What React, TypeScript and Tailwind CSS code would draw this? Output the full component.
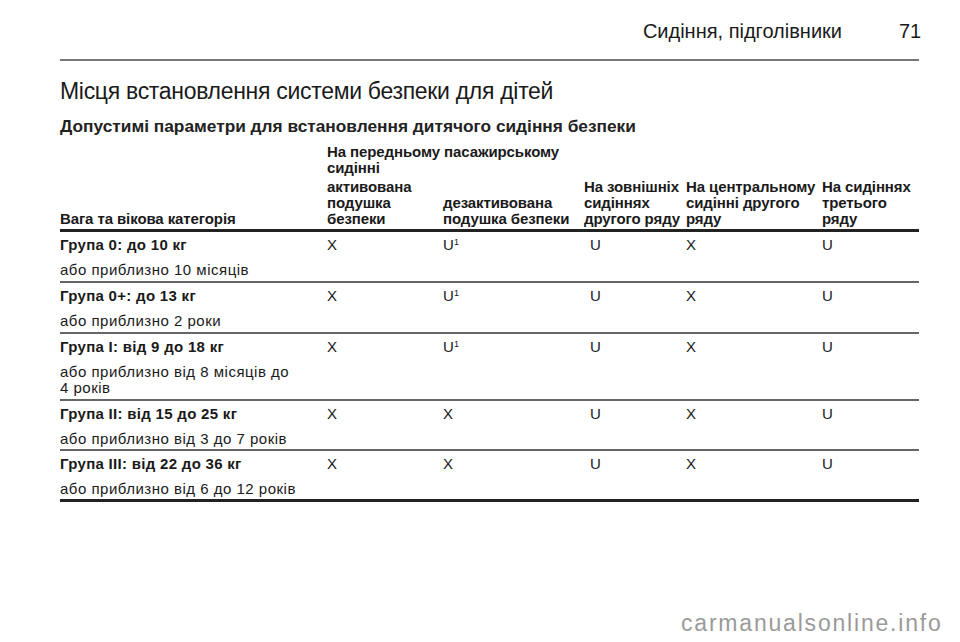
import React from "react";

const rows = [
  { t: "Група 0: до 10 кг", s: ["або приблизно 10 місяців"], v: ["X", "U1", "U", "X", "U"] },
  { t: "Група 0+: до 13 кг", s: ["або приблизно 2 роки"], v: ["X", "U1", "U", "X", "U"] },
  { t: "Група I: від 9 до 18 кг", s: ["або приблизно від 8 місяців до", "4 років"], v: ["X", "U1", "U", "X", "U"] },
  { t: "Група II: від 15 до 25 кг", s: ["або приблизно від 3 до 7 років"], v: ["X", "X", "U", "X", "U"] },
  { t: "Група III: від 22 до 36 кг", s: ["або приблизно від 6 до 12 років"], v: ["X", "X", "U", "X", "U"] },
];

const cols = "grid grid-cols-[267px_116px_141px_102px_136px_97px]";

export default function App() {
  return (
    <div
      className="relative w-[960px] h-[642px] bg-white text-[#1a1a1a] overflow-hidden"
      style={{ fontFamily: '"Liberation Sans", Arial, sans-serif' }}
    >
      <div className="pl-[60px] w-[919px]">
        <div className="flex justify-end items-end h-[43px] text-[20px] leading-[24px]">
          <span>Сидіння, підголівники</span>
          <span className="ml-[57px] w-[20px] text-right">71</span>
        </div>
        <div className="mt-[16px] h-[2px] bg-[#777]" />
        <div className="mt-[16px] text-[23px] leading-[28px] tracking-[-0.3px]">
          Місця встановлення системи безпеки для дітей
        </div>
        <div className="mt-[11px] text-[17.3px] leading-[20px] font-bold text-[#222]">
          Допустимі параметри для встановлення дитячого сидіння безпеки
        </div>

        <div className="mt-[8px] text-[15px] leading-[16px]">
          <div className={`${cols} font-bold tracking-[-0.1px]`}>
            <div />
            <div className="col-span-2">
              На передньому пасажирському
              <br />
              сидінні
            </div>
          </div>
          <div className={`${cols} font-bold tracking-[-0.1px] items-end mt-[3px] pb-[2px] border-b-[3px] border-[#222]`}>
            <div>Вага та вікова категорія</div>
            <div>
              активована
              <br />
              подушка
              <br />
              безпеки
            </div>
            <div>
              дезактивована
              <br />
              подушка безпеки
            </div>
            <div>
              На зовнішніх
              <br />
              сидіннях
              <br />
              другого ряду
            </div>
            <div>
              На центральному
              <br />
              сидінні другого
              <br />
              ряду
            </div>
            <div>
              На сидіннях
              <br />
              третього
              <br />
              ряду
            </div>
          </div>
          {rows.map((r, i) => (
            <div
              key={i}
              className={`${cols} pt-[5px] ${i >= 3 ? "pb-[2px]" : "pb-[3px]"} ${
                i === rows.length - 1 ? "border-b-[3px] border-[#222]" : "border-b-[2px] border-[#666]"
              }`}
            >
              <div>
                <div className="font-bold tracking-[0.3px]">{r.t}</div>
                <div className="mt-[9px] leading-[16px] tracking-[0.5px]">
                  {r.s.map((l, j) => (
                    <div key={j}>{l}</div>
                  ))}
                </div>
              </div>
              {r.v.map((v, j) => (
                <div key={j} className={j === 2 ? "pl-[6px]" : ""}>
                  {v === "U1" ? (
                    <span className="relative">
                      U<span className="absolute left-[11px] top-[1px] text-[9px] leading-[10px]">1</span>
                    </span>
                  ) : (
                    v
                  )}
                </div>
              ))}
            </div>
          ))}
        </div>
      </div>
      <div className="absolute left-[681px] top-[609px] text-[23px] leading-[28px] text-[#9a9a9a] tracking-[1.8px]">
        carmanualsonline.info
      </div>
    </div>
  );
}
